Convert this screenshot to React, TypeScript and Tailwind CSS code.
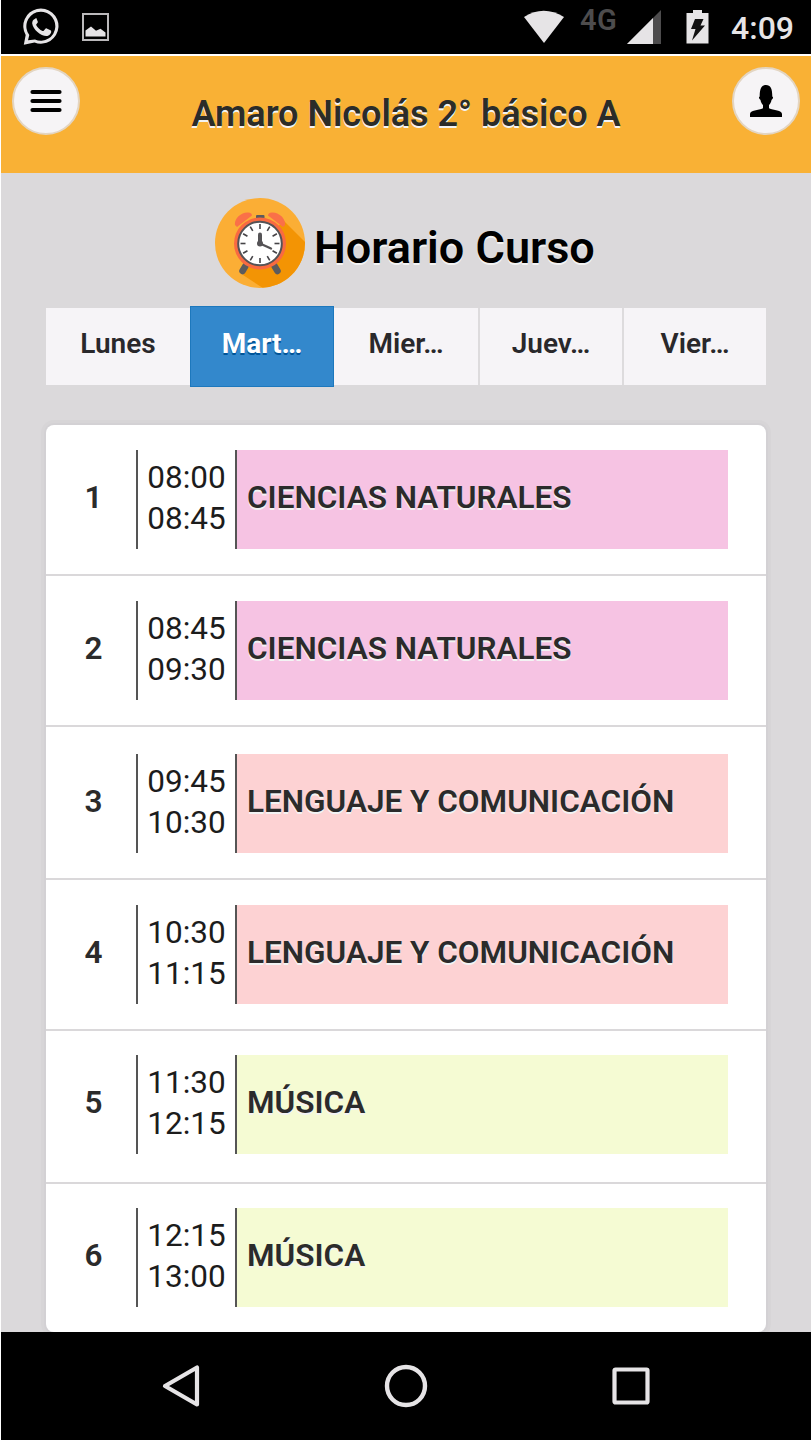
import React from 'react';

type Lesson = {
  start: string;
  end: string;
  name: string;
  color: string;
  row: string;
};

const lessons: Lesson[] = [
  { start: '08:00', end: '08:45', name: 'CIENCIAS NATURALES', color: 'bg-[#f6c3e3]', row: 'h-[151px] pt-[25px] border-b-2' },
  { start: '08:45', end: '09:30', name: 'CIENCIAS NATURALES', color: 'bg-[#f6c3e3]', row: 'h-[151px] pt-[25px] border-b-2' },
  { start: '09:45', end: '10:30', name: 'LENGUAJE Y COMUNICACIÓN', color: 'bg-[#fdd2d3]', row: 'h-[153px] pt-[27px] border-b-2' },
  { start: '10:30', end: '11:15', name: 'LENGUAJE Y COMUNICACIÓN', color: 'bg-[#fdd2d3]', row: 'h-[151px] pt-[25px] border-b-2' },
  { start: '11:30', end: '12:15', name: 'MÚSICA', color: 'bg-[#f5fbd3]', row: 'h-[153px] pt-[24px] border-b-2' },
  { start: '12:15', end: '13:00', name: 'MÚSICA', color: 'bg-[#f5fbd3]', row: 'h-[148px] pt-[24px]' },
];

const days = ['Lunes', 'Martes', 'Miercoles', 'Jueves', 'Viernes'];
const shortDays = ['Lunes', 'Mart…', 'Mier…', 'Juev…', 'Vier…'];

function StatusBar() {
  return (
    <div className="flex h-[54px] shrink-0 items-start bg-black text-[#e6e4e6]">
      <svg className="ml-[22px] mt-[8px] h-[38px] w-[38px]" viewBox="0 0 38 38" fill="none">
        <path d="M.8 36.800 2.700 27A17.600 17.600 0 1 1 11.500 34.500Z" fill="#e6e4e6" />
        <path d="M5 32.200 6.300 27A14.500 14.500 0 1 1 12 31.500Z" fill="#000" />
        <path
          d="M12.200 10.700c-2 .5-3.200 2.600-3 4.800.8 6.100 8.600 12.500 14.200 12.600 2.200 0 4.800-2 4.800-4.600 0-.7-.2-.9-.7-1.200l-3.800-1.800c-.7-.3-1-.1-1.500.5l-1.500 1.700c-.4.4-.7.4-1.200.2-2.700-1.200-4.900-3.200-6.200-5.700-.3-.5 0-.8.3-1.200l1.100-1.400c.3-.4.2-.8 0-1.200l-1.200-3c-.3-.6-.8-.3-1.300.3Z"
          fill="#e6e4e6"
        />
      </svg>
      <svg className="ml-[21px] mt-[13px] h-[28px] w-[27px]" viewBox="0 0 27 28">
        <rect x="1" y="1" width="25" height="26" fill="none" stroke="#bbb9bb" strokeWidth="2" />
        <path d="M3.500 23.500v-6l5.500-4 5 4.300 4.500-2 5 3.700v4Z" fill="#e6e4e6" />
      </svg>
      <svg className="ml-[414px] mt-[9px] h-[35px] w-[42px]" viewBox="0 0 42 35">
        <path d="M1 8Q20.500-4.500 41 8L21 34Z" fill="#e6e4e6" />
      </svg>
      <span className="ml-[15px] mt-[5px] w-[42px] font-['Roboto'] text-[29px] font-semibold leading-[30px] tracking-[0.500px] text-[#4d4c4d]">4G</span>
      <svg className="ml-[5px] mt-[10px] h-[34px] w-[34px]" viewBox="0 0 34 34">
        <path d="M0 34 34 0V34Z" fill="#4d4c4d" />
        <path d="M0 34 26 8V34Z" fill="#e6e4e6" />
      </svg>
      <svg className="ml-[25px] mt-[10px] h-[34px] w-[23px]" viewBox="0 0 23 34">
        <path d="M7 0h9v3h6.500v30.500H.5V3H7Z" fill="#e6e4e6" />
        <path d="M9 9h8.500l-3 6.500h4.500L6 30.500 9.500 19H5Z" fill="#111" />
      </svg>
      <span className="ml-[22px] mt-[8px] whitespace-nowrap font-['Roboto'] text-[32px] font-medium leading-[40px]">4:09</span>
    </div>
  );
}

function ClockBadge() {
  const ticks = Array.from({ length: 12 }, (_, i) => i * 30);
  return (
    <svg className="h-[90px] w-[90px] shrink-0" viewBox="0 0 90 90">
      <defs>
        <clipPath id="badge">
          <circle cx="45" cy="45" r="45" />
        </clipPath>
      </defs>
      <circle cx="45" cy="45" r="45" fill="#fbae35" />
      <path d="M68 22 102 56V102H66L28 77Z" fill="#f39404" clipPath="url(#badge)" />
      <path d="M20 27c-1-6 6-13 13-12.500 3 .2 4 1.500 4 3L22 29ZM70 27c1-6-6-13-13-12.500-3 .2-4 1.500-4 3L68 29Z" fill="#fa7048" />
      <path d="M30.500 68l-3 5M59.500 68l3 5" stroke="#5c5b5d" strokeWidth="6.500" strokeLinecap="round" />
      <rect x="41" y="17" width="8.500" height="6" rx="1" fill="#5c5b5d" />
      <circle cx="45" cy="45.500" r="26" fill="#f96a41" />
      <circle cx="45" cy="45.500" r="21.800" fill="#fff" stroke="#555356" strokeWidth="2" />
      {ticks.map((angle) => (
        <path
          key={angle}
          d="M45 26v5"
          stroke="#454347"
          strokeWidth="1.600"
          transform={`rotate(${angle} 45 45.500)`}
        />
      ))}
      <path d="M45 36.500V45" stroke="#555356" strokeWidth="4" strokeLinecap="round" />
      <path d="M45 45.500 56 50.500" stroke="#555356" strokeWidth="2.400" strokeLinecap="round" />
      <circle cx="45" cy="45.500" r="3" fill="#555356" />
    </svg>
  );
}

function Header() {
  return (
    <header className="mt-[2px] flex h-[117px] shrink-0 items-start justify-between bg-[#f9b135] px-[11px] pt-[11px]">
      <button aria-label="Menu" className="flex h-[68px] w-[68px] items-center justify-center rounded-full border-2 border-[#e3d5c2] bg-[#f6f4f6]">
        <svg className="h-[24px] w-[32px]" viewBox="0 0 32 24">
          <path d="M2.500 3h27M2.500 12h27M2.500 21h27" stroke="#000" strokeWidth="4.200" strokeLinecap="round" />
        </svg>
      </button>
      <h1 className="mt-[25px] whitespace-nowrap text-[36px] font-semibold leading-[44px] text-[#2b2c29] [text-shadow:0_2px_0_#f3f3f3]">
        Amaro Nicolás 2° básico A
      </h1>
      <button aria-label="Perfil" className="flex h-[68px] w-[68px] items-center justify-center rounded-full border-2 border-[#e3d5c2] bg-[#f6f4f6]">
        <svg className="h-[32px] w-[32px]" viewBox="0 0 32 32">
          <path
            d="M16 0c-4.500 0-6.300 3.500-6.300 11.500-1.300.5-.8 2.500.8 3.500.4 2.500 1.500 4 2.500 5v3.200C8.500 25.300 0 25 0 29v3h32v-3c0-4-8.500-3.700-13-5.800V20c1-1 2.100-2.500 2.500-5 1.600-1 2.100-3 .8-3.500C22.300 3.500 20.500 0 16 0Z"
            fill="#000"
          />
        </svg>
      </button>
    </header>
  );
}

function DayTabs() {
  return (
    <nav className="mx-[45px] mt-[18px] flex h-[81px] shrink-0 items-center">
      {shortDays.map((label, i) =>
        i === 1 ? (
          <button
            key={label}
            aria-label={days[i]}
            className="h-[81px] w-[144px] border border-[#1d78bd] bg-[#3388cc] pb-[5px] text-[28px] font-bold leading-[36px] text-white [text-shadow:0_2px_0_#005599]"
          >
            {label}
          </button>
        ) : (
          <button
            key={label}
            aria-label={days[i]}
            className={`h-[77px] bg-[#f6f4f7] pb-[5px] text-[28px] font-semibold leading-[36px] text-[#29282b] ${i === 0 ? 'w-[144px]' : i === 2 ? 'w-[146px] border-r-2 border-[#dddbdd]' : i === 3 ? 'w-[144px] border-r-2 border-[#dddbdd]' : 'flex-1'}`}
          >
            {label}
          </button>
        ),
      )}
    </nav>
  );
}

function LessonRow({ lesson, index }: { lesson: Lesson; index: number }) {
  return (
    <li className={`flex items-start border-[#dad8da] ${lesson.row}`}>
      <div className="flex h-[99px] w-[90px] items-center justify-center pb-[3px] pl-[5px] text-[31.500px] font-semibold text-[#2b2b2b]">
        {index + 1}
      </div>
      <div className="flex h-[99px] w-[99px] flex-col items-center border-l-2 border-[#555] pt-[8px] text-[31.500px] font-normal leading-[40.500px] text-[#1c1c1c]">
        <span>{lesson.start}</span>
        <span>{lesson.end}</span>
      </div>
      <div className={`flex h-[99px] w-[493px] items-center whitespace-nowrap border-l-2 border-[#555] pb-[3px] pl-[10px] text-[31.500px] font-semibold text-[#2b2b2b] [text-shadow:0_2px_0_#f3f3f3] ${lesson.color}`}>
        {lesson.name}
      </div>
    </li>
  );
}

function NavigationBar() {
  return (
    <div className="flex h-[108px] shrink-0 items-center bg-black pl-[161px]">
      <svg className="h-[44px] w-[40px]" viewBox="0 0 40 44">
        <path d="M35 3.500v37L3 22Z" fill="none" stroke="#e6e4e6" strokeWidth="4.200" strokeLinejoin="round" />
      </svg>
      <svg className="ml-[182px] h-[44px] w-[44px]" viewBox="0 0 44 44">
        <circle cx="22" cy="22" r="19" fill="none" stroke="#e6e4e6" strokeWidth="4.400" />
      </svg>
      <svg className="ml-[182px] h-[44px] w-[42px]" viewBox="0 0 42 44">
        <rect x="4.500" y="5.500" width="33" height="33" rx="1" fill="none" stroke="#e6e4e6" strokeWidth="4.200" />
      </svg>
    </div>
  );
}

export default function App() {
  return (
    <div className="flex h-[1440px] w-[812px] flex-col overflow-hidden bg-white px-px font-['Roboto',sans-serif]">
      <StatusBar />
      <Header />
      <main className="flex h-[1159px] shrink-0 flex-col overflow-hidden bg-[#dbd9db]">
        <div className="mt-[25px] flex h-[90px] shrink-0 items-center pl-[214px]">
          <ClockBadge />
          <h2 className="ml-[9px] mt-[10px] whitespace-nowrap text-[45px] font-semibold leading-[52px] text-black [text-shadow:0_2px_0_#f3f3f3]">
            Horario Curso
          </h2>
        </div>
        <DayTabs />
        <ul className="mx-[45px] mt-[38px] shrink-0 overflow-hidden rounded-[8px] bg-white shadow-[0_0_0_2px_#d3d1d4,0_0_0_5px_#d7d5d7]">
          {lessons.map((lesson, i) => (
            <LessonRow key={lesson.start} lesson={lesson} index={i} />
          ))}
        </ul>
      </main>
      <NavigationBar />
    </div>
  );
}
